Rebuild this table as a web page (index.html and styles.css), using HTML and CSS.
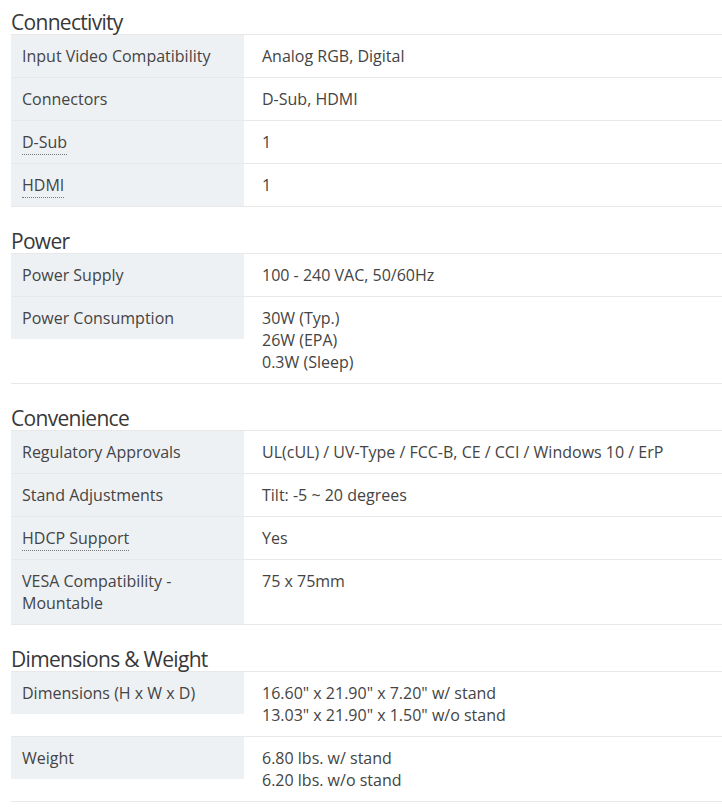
FILE: index.html
```html
<!DOCTYPE html>
<html lang="en">
<head>
<meta charset="utf-8">
<title>Specifications</title>
<link rel="stylesheet" href="styles.css">
</head>
<body>
<div class="specs">
  <section class="spec-group">
    <h3 class="spec-title">Connectivity</h3>
    <div class="spec-table">
      <div class="spec-row"><div class="spec-label">Input Video Compatibility</div><div class="spec-value">Analog RGB, Digital</div></div>
      <div class="spec-row"><div class="spec-label">Connectors</div><div class="spec-value">D-Sub, HDMI</div></div>
      <div class="spec-row"><div class="spec-label"><span class="term">D-Sub</span></div><div class="spec-value">1</div></div>
      <div class="spec-row"><div class="spec-label"><span class="term">HDMI</span></div><div class="spec-value">1</div></div>
    </div>
  </section>
  <section class="spec-group">
    <h3 class="spec-title">Power</h3>
    <div class="spec-table">
      <div class="spec-row"><div class="spec-label">Power Supply</div><div class="spec-value">100 - 240 VAC, 50/60Hz</div></div>
      <div class="spec-row"><div class="spec-label">Power Consumption</div><div class="spec-value">30W (Typ.)<br>26W (EPA)<br>0.3W (Sleep)</div></div>
    </div>
  </section>
  <section class="spec-group">
    <h3 class="spec-title">Convenience</h3>
    <div class="spec-table">
      <div class="spec-row"><div class="spec-label">Regulatory Approvals</div><div class="spec-value">UL(cUL) / UV-Type / FCC-B, CE / CCI / Windows 10 / ErP</div></div>
      <div class="spec-row"><div class="spec-label">Stand Adjustments</div><div class="spec-value">Tilt: -5 ~ 20 degrees</div></div>
      <div class="spec-row"><div class="spec-label"><span class="term">HDCP Support</span></div><div class="spec-value">Yes</div></div>
      <div class="spec-row"><div class="spec-label">VESA Compatibility - Mountable</div><div class="spec-value">75 x 75mm</div></div>
    </div>
  </section>
  <section class="spec-group">
    <h3 class="spec-title">Dimensions &amp; Weight</h3>
    <div class="spec-table">
      <div class="spec-row"><div class="spec-label">Dimensions (H x W x D)</div><div class="spec-value">16.60" x 21.90" x 7.20" w/ stand<br>13.03" x 21.90" x 1.50" w/o stand</div></div>
      <div class="spec-row"><div class="spec-label">Weight</div><div class="spec-value">6.80 lbs. w/ stand<br>6.20 lbs. w/o stand</div></div>
    </div>
  </section>
</div>
</body>
</html>
```
FILE: styles.css
```css
html, body {
  margin: 0;
  padding: 0;
  background: #ffffff;
}
body {
  font-family: "Open Sans", "Liberation Sans", sans-serif;
  color: #444444;
}
.specs {
  margin-left: 11px;
  padding-top: 1px;
}
.spec-group + .spec-group {
  margin-top: 12px;
}
.spec-title {
  margin: 0;
  padding-top: 9px;
  font-size: 21px;
  line-height: 24px;
  letter-spacing: -0.7px;
  font-weight: 400;
  color: #383838;
}
.spec-group + .spec-group .spec-title {
  padding-top: 10px;
}
.spec-table {
  border-top: 1px solid #e8e8e8;
}
.spec-row {
  display: grid;
  grid-template-columns: 233px 1fr;
  border-bottom: 1px solid #e8e8e8;
  font-size: 16px;
  line-height: 22px;
}
.spec-label {
  align-self: start;
  background: #eef1f4;
  padding: 10px 11px;
}
.spec-value {
  padding: 10px 18px;
}
.term {
  border-bottom: 1px dotted #777777;
  padding-bottom: 1px;
}
```
